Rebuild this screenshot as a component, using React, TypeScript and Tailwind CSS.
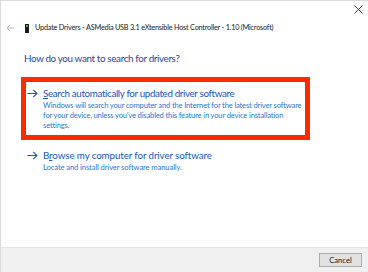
import React from "react";

function Arrow({ className }: { className?: string }) {
  return (
    <svg width="11" height="9" viewBox="0 0 11 9" className={className}>
      <path d="M0.5 4.5H10M6.2 0.8L10 4.5L6.2 8.2" fill="none" stroke="#1a56c0" strokeWidth="1.1" />
    </svg>
  );
}

export default function App() {
  const font = { fontFamily: 'Lato, "Noto Sans", sans-serif' };
  return (
    <div className="w-[368px] h-[272px] bg-white border-l border-t border-[#dadada] flex flex-col overflow-hidden" style={font}>
      <div className="h-[17px] flex justify-end items-center pr-[5px]">
        <svg width="9" height="9" viewBox="0 0 9 9">
          <path d="M0.5 0.5L8.5 8.5M8.5 0.5L0.5 8.5" stroke="#3a3a3a" strokeWidth="1" />
        </svg>
      </div>
      <div className="h-[20px] flex items-center">
        <svg width="9" height="8" viewBox="0 0 9 8" className="ml-[5px] shrink-0">
          <path d="M8.5 4H1M4.2 0.8L1 4L4.2 7.2" fill="none" stroke="#bdbdbd" strokeWidth="1" />
        </svg>
        <svg width="4" height="9" viewBox="0 0 4 9" className="ml-[10px] shrink-0">
          <rect x="0" y="0" width="4" height="9" fill="#1b1b1b" />
          <rect x="1" y="1" width="2" height="2" fill="#3fae49" />
        </svg>
        <span className="ml-[6px] text-[7.3px] leading-[10px] text-[#1a1a1a] whitespace-nowrap tracking-[-0.22px]">
          Update Drivers - ASMedia USB 3.1 eXtensible Host Controller - 1.10 (Microsoft)
        </span>
      </div>
      <div className="pl-[23px] mt-[13px] text-[9.8px] leading-[14px] text-[#23489e] whitespace-nowrap tracking-[-0.34px]">
        How do you want to search for drivers?
      </div>
      <div className="ml-[20px] mt-[12px] w-[289px] h-[63px] border-[5px] border-[#ff2a00] pl-[1px] pt-[4px]">
        <div className="flex items-start">
          <Arrow className="mt-[3px] shrink-0" />
          <div className="ml-[5px]">
            <div className="text-[9.8px] leading-[14px] text-[#1a56c0] whitespace-nowrap tracking-[-0.36px]">
              <span className="underline underline-offset-[1px]">S</span>earch automatically for updated driver software
            </div>
            <div className="text-[7.6px] leading-[10px] text-[#1f7ad6] whitespace-nowrap tracking-[-0.16px]">
              <div>Windows will search your computer and the Internet for the latest driver software</div>
              <div>for your device, unless you've disabled this feature in your device installation</div>
              <div>settings.</div>
            </div>
          </div>
        </div>
      </div>
      <div className="ml-[26px] mt-[8px] flex items-start">
        <Arrow className="mt-[3px] shrink-0" />
        <div className="ml-[5px]">
          <div className="text-[9.8px] leading-[14px] text-[#1a56c0] whitespace-nowrap tracking-[-0.12px]">
            B<span className="underline underline-offset-[1px]">r</span>owse my computer for driver software
          </div>
          <div className="text-[7.6px] leading-[10px] text-[#1f7ad6] whitespace-nowrap tracking-[-0.1px]">
            Locate and install driver software manually.
          </div>
        </div>
      </div>
      <div className="flex-1" />
      <div className="h-[25px] bg-[#f0f0f0] border-t border-[#e3e3e3] flex items-center justify-end pr-[6px]">
        <div className="w-[43px] h-[14px] bg-[#e1e1e1] border border-[#adadad] flex items-center justify-center text-[7.6px] leading-[10px] text-[#1a1a1a]">
          Cancel
        </div>
      </div>
    </div>
  );
}
